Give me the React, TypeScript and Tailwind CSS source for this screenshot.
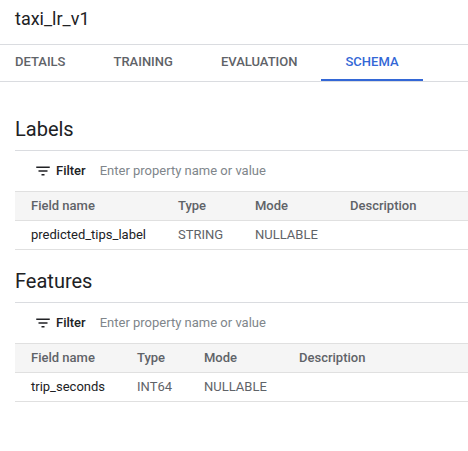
import React from 'react'

const TABS = ['DETAILS', 'TRAINING', 'EVALUATION', 'SCHEMA']

type Field = { name: string; type: string; mode: string; description: string }

const SECTIONS: { title: string; cols: string; padTop: string; fields: Field[] }[] = [
  {
    title: 'Labels',
    cols: 'grid-cols-[163px_77px_95px_1fr]',
    padTop: 'pt-[33px]',
    fields: [{ name: 'predicted_tips_label', type: 'STRING', mode: 'NULLABLE', description: '' }],
  },
  {
    title: 'Features',
    cols: 'grid-cols-[122px_67px_95px_1fr]',
    padTop: 'pt-[17px]',
    fields: [{ name: 'trip_seconds', type: 'INT64', mode: 'NULLABLE', description: '' }],
  },
]

function FilterIcon() {
  return (
    <svg width="18" height="18" viewBox="0 0 24 24" fill="#202124" className="shrink-0">
      <path d="M10 18h4v-2h-4v2zM3 6v2h18V6H3zm3 7h12v-2H6v2z" />
    </svg>
  )
}

function SchemaSection({ title, cols, padTop, fields }: (typeof SECTIONS)[number]) {
  return (
    <section className="ml-[15px]">
      {/* Heading */}
      <h2 className={`${padTop} pb-[7px] text-[20px] leading-[28px] text-[#202124] border-b border-[#dadce0]`}>
        {title}
      </h2>

      {/* Filter bar */}
      <div className="h-[40px] flex items-center pl-[19px] text-[13px]">
        <FilterIcon />
        <span className="ml-[4px] font-medium text-[#202124]">Filter</span>
        <input
          className="ml-[14px] flex-1 outline-none bg-transparent placeholder:text-[#80868b] text-[#202124]"
          placeholder="Enter property name or value"
        />
      </div>

      {/* Table */}
      <div className={`grid ${cols} h-[30px] items-center bg-[#f5f5f5] border-y border-[#e0e0e0] text-[13px] font-medium text-[#5f6368]`}>
        <div className="pl-4">Field name</div>
        <div>Type</div>
        <div>Mode</div>
        <div>Description</div>
      </div>
      {fields.map(f => (
        <div key={f.name} className={`grid ${cols} h-[29px] items-center border-b border-[#e0e0e0] text-[13px]`}>
          <div className="pl-4 text-[#202124]">{f.name}</div>
          <div className="text-[#5f6368]">{f.type}</div>
          <div className="text-[#5f6368]">{f.mode}</div>
          <div className="text-[#5f6368]">{f.description}</div>
        </div>
      ))}
    </section>
  )
}

export default function App() {
  return (
    <div className="w-[468px] h-[451px] bg-white overflow-hidden font-['Roboto','Liberation_Sans',sans-serif]">
      {/* Title */}
      <div className="h-[45px] flex items-center px-[15px] border-b border-[#dadce0]">
        <h1 className="text-[18px] leading-[24px] text-[#202124] -mt-[6px]">taxi_lr_v1</h1>
      </div>

      {/* Tabs */}
      <div className="flex h-[37px] border-b border-[#dadce0]">
        {TABS.map((tab, i) => {
          const active = tab === 'SCHEMA'
          return (
            <div
              key={tab}
              className={`flex items-center ${i === 0 ? 'pl-[15px] pr-6' : 'px-6'} text-[13px] font-medium border-b-2 ${
                active ? 'border-[#3367d6] text-[#3367d6]' : 'border-transparent text-[#5f6368]'
              }`}
            >
              {tab}
            </div>
          )
        })}
      </div>

      {SECTIONS.map(s => (
        <SchemaSection key={s.title} {...s} />
      ))}
    </div>
  )
}
